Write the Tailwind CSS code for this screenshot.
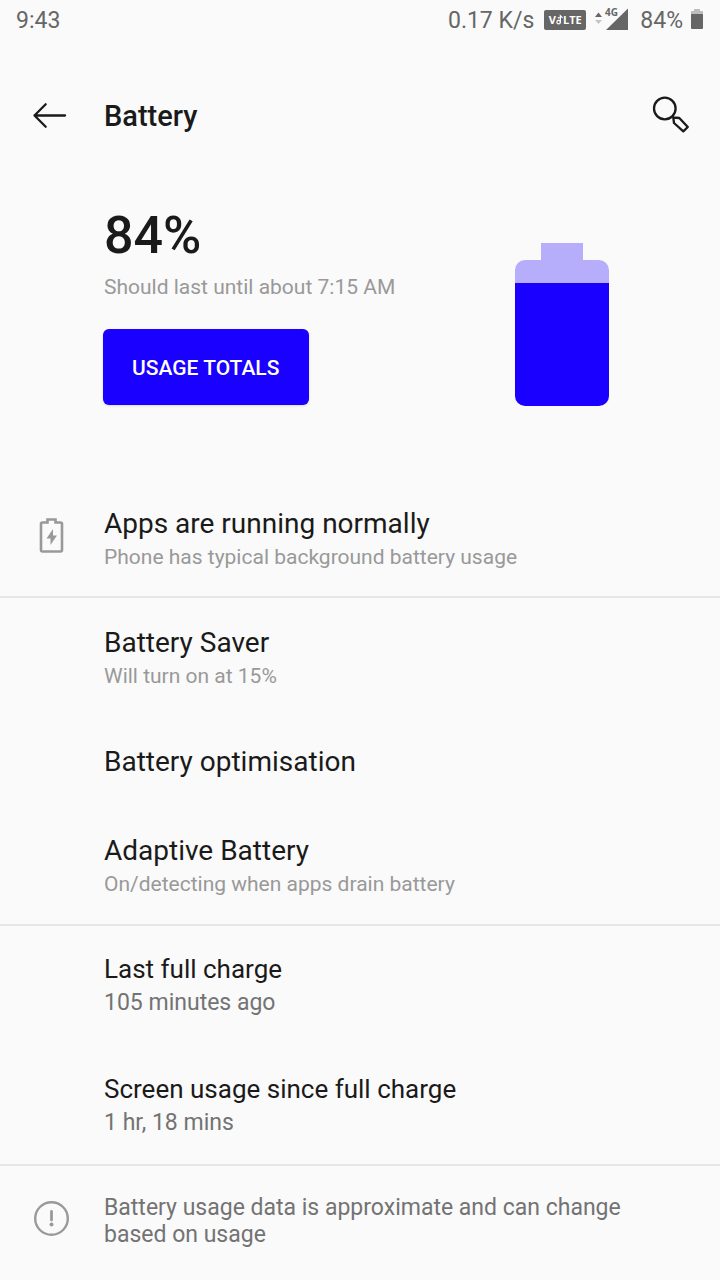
<!DOCTYPE html>
<html lang="en">
<head>
<meta charset="utf-8">
<meta name="viewport" content="width=device-width, initial-scale=1">
<title>Battery</title>
<script src="https://cdn.jsdelivr.net/npm/@tailwindcss/browser@4"></script>
</head>
<body class="min-h-screen bg-[#fafafa] font-[Roboto,sans-serif] text-[#1a1a1a]">
<div class="flex h-10 items-center justify-between pr-[17px] pl-4 text-[23px] leading-8 text-[#666666]">
  <time class="pt-0.5">9:43</time>
  <div class="flex items-center">
    <span class="pt-0.5">0.17 K/s</span>
    <span class="ml-[10px] flex h-5 w-[42px] items-center justify-center rounded-xs bg-[#666666] font-['Open_Sans',sans-serif] text-[11px] font-bold text-white">V<svg class="h-3 w-[7px]" viewBox="0 0 8 12" fill="none" stroke="currentColor" stroke-width="1.4" aria-hidden="true"><circle cx="3" cy="8.5" r="2"/><path d="M5 9V1l2.500 2.500M2 4l2-1"/></svg>LTE</span>
    <svg class="ml-2 h-10 w-9 overflow-visible" viewBox="0 -8 36 40" aria-label="4G signal" role="img">
      <path d="M1 9l3.500-4.500L8 9z" fill="#666666"/>
      <path d="M1 12h7l-3.500 4z" fill="#c4c4c4"/>
      <path d="M34 0.500v21.500H12z" fill="#666666"/>
      <path d="M10 0h15v8H10z" fill="#fafafa"/>
      <text x="11" y="8" font-family="Open Sans" font-size="10" font-weight="700" fill="#666666">4G</text>
    </svg>
    <span class="ml-[10px] pt-0.5">84%</span>
    <svg class="ml-2 h-[22px] w-3" viewBox="0 0 12 22" aria-hidden="true">
      <path d="M3 0h6v2h3v4H0V2h3z" fill="#bdbdbd"/>
      <path d="M0 5h12v14a1 1 0 0 1-1 1H1a1 1 0 0 1-1-1z" fill="#666666"/>
    </svg>
  </div>
</div>

<header class="mt-10 flex h-18 items-center pr-[30px] pl-8">
  <button type="button" aria-label="Back" class="w-[72px]">
    <svg class="h-9 w-9" viewBox="0 0 36 36" fill="none" stroke="#1a1a1a" stroke-width="2.300" stroke-linecap="round" stroke-linejoin="round"><path d="M13.700 6.300L2.500 17.500 13.700 28.700M2.500 17.500H33"/></svg>
  </button>
  <h1 class="pt-0.5 text-[29px] font-medium">Battery</h1>
  <button type="button" aria-label="Search" class="ml-auto">
    <svg class="h-10 w-10" viewBox="0 0 40 40" fill="none" stroke="#1a1a1a" stroke-width="2.300" stroke-linejoin="round"><circle cx="14.800" cy="12.500" r="10.800"/><path d="M22 20l1.500 1.500M23.300 21.500L29.300 22 37.800 31 33.300 35.300 24 27z"/></svg>
  </button>
</header>

<main>
  <section class="flex justify-between pr-[111px] pb-[76px] pl-[103px]">
    <div class="pt-[54px]">
      <p class="pl-px text-[52px] leading-[60px] font-medium">84%</p>
      <p class="mt-[6px] pl-px text-[21px] leading-[30px] text-[#999999]">Should last until about 7:15 AM</p>
      <button type="button" class="mt-[27px] h-19 rounded-md bg-[#1a00ff] pt-[3px] pr-[30px] pl-[29px] text-[21px] font-medium text-white shadow-sm">USAGE TOTALS</button>
    </div>
    <svg class="mt-[91px] h-[163px] w-[94px]" viewBox="0 0 94 163" role="img" aria-label="Battery at 84%">
      <path d="M26 0H68V17H84a10 10 0 0 1 10 10V40H0V27a10 10 0 0 1 10-10H26z" fill="#b6aefa"/>
      <path d="M0 40H94V153a10 10 0 0 1-10 10H10a10 10 0 0 1-10-10z" fill="#1a00ff"/>
    </svg>
  </section>

  <section class="flex border-b-2 border-[#e6e6e6] py-6">
    <div class="w-[104px] pt-[10px] pl-8">
      <svg class="h-10 w-10" viewBox="0 0 40 40" aria-hidden="true">
        <path d="M10.500 6.500H15.500V3.500H23.500V6.500H28.500a1.500 1.500 0 0 1 1.500 1.500V34a1.500 1.500 0 0 1-1.500 1.500H10.500a1.500 1.500 0 0 1-1.500-1.500V8a1.500 1.500 0 0 1 1.500-1.500z" fill="none" stroke="#999999" stroke-width="2.600"/>
        <path d="M21 13L14.500 22.500H18.500V29L25 19.500H21z" fill="#999999"/>
      </svg>
    </div>
    <div>
      <h2 class="text-[28px] leading-9">Apps are running normally</h2>
      <p class="text-[21px] leading-[30px] text-[#999999]">Phone has typical background battery usage</p>
    </div>
  </section>

  <section class="flex flex-col gap-[53px] border-b-2 border-[#e6e6e6] pt-[27px] pb-[25px] pl-[104px]">
    <div>
      <h2 class="text-[28px] leading-9">Battery Saver</h2>
      <p class="text-[21px] leading-[30px] text-[#999999]">Will turn on at 15%</p>
    </div>
    <h2 class="text-[28px] leading-9">Battery optimisation</h2>
    <div>
      <h2 class="text-[28px] leading-9">Adaptive Battery</h2>
      <p class="text-[21px] leading-[30px] text-[#999999]">On/detecting when apps drain battery</p>
    </div>
  </section>

  <section class="flex flex-col gap-[52px] border-b-2 border-[#e6e6e6] py-[25px] pl-[104px]">
    <div>
      <h2 class="text-[26px] leading-9">Last full charge</h2>
      <p class="text-[23px] leading-8 text-[#737373]">105 minutes ago</p>
    </div>
    <div>
      <h2 class="text-[26px] leading-9">Screen usage since full charge</h2>
      <p class="text-[23px] leading-8 text-[#737373]">1 hr, 18 mins</p>
    </div>
  </section>

  <footer class="flex pt-7 pr-16">
    <div class="w-[104px] shrink-0 pt-1 pl-8">
      <svg class="h-10 w-10" viewBox="0 0 40 40" aria-hidden="true">
        <circle cx="19.500" cy="20.500" r="16.300" fill="none" stroke="#999999" stroke-width="2.400"/>
        <path d="M19.500 13.500v8.500" stroke="#999999" stroke-width="2.800" stroke-linecap="round"/>
        <circle cx="19.500" cy="26.500" r="2" fill="#999999"/>
      </svg>
    </div>
    <p class="text-[23px] leading-[27px] text-[#737373]">Battery usage data is approximate and can change based on usage</p>
  </footer>
</main>
</body>
</html>
